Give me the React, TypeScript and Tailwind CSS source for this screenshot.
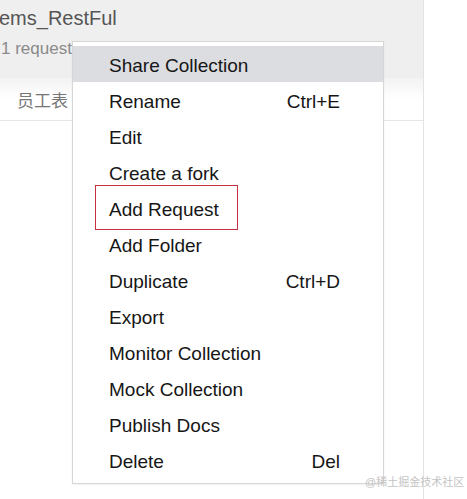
import React from "react";

const items: { label: string; shortcut?: string }[] = [
  { label: "Share Collection" },
  { label: "Rename", shortcut: "Ctrl+E" },
  { label: "Edit" },
  { label: "Create a fork" },
  { label: "Add Request" },
  { label: "Add Folder" },
  { label: "Duplicate", shortcut: "Ctrl+D" },
  { label: "Export" },
  { label: "Monitor Collection" },
  { label: "Mock Collection" },
  { label: "Publish Docs" },
  { label: "Delete", shortcut: "Del" },
];

export default function App() {
  return (
    <div
      className="relative w-[467px] h-[499px] bg-white overflow-hidden"
      style={{ fontFamily: '"Segoe UI", "Liberation Sans", "Noto Sans CJK SC", sans-serif' }}
    >
      <div className="w-[424px] h-full border-r border-[#e3e3e3] flex flex-col">
        <div className="h-[78px] bg-[#efefef] flex flex-col pl-[1px]">
          <div className="text-[20px] text-[#555] mt-[5px] leading-[26px] -ml-[2px]">ems_RestFul</div>
          <div className="text-[17px] text-[#8a8a8a] mt-[7px] leading-[22px]">1 request</div>
        </div>
        <div className="h-[43px] border-b border-[#e6e6e6] bg-gradient-to-b from-[#f3f3f3] to-white to-50% flex items-start pl-[17px] pt-[13px]">
          <span className="text-[17px] leading-[22px] text-[#777]">员工表</span>
        </div>
      </div>

      <div className="absolute left-[72px] top-[41px] w-[312px] bg-white border border-[#d6d6d6] pt-[4px] pb-[5px] shadow-[0_1px_2px_rgba(0,0,0,0.06)]">
        {items.map((it, i) => (
          <div
            key={it.label}
            className={
              "h-[36px] flex items-center justify-between pl-[36px] pr-[43px] pt-[4px] text-[19px] text-[#161616] " +
              (i === 0 ? "bg-[#dcdde0]" : "")
            }
          >
            <span>{it.label}</span>
            {it.shortcut ? <span>{it.shortcut}</span> : null}
          </div>
        ))}
      </div>

      <div className="absolute left-[95px] top-[185px] w-[143px] h-[45px] border border-[#c8303e]" />

      <div className="absolute left-[365px] top-[475px] text-[11px] text-[#c4c4c4] leading-[14px]">
        @稀土掘金技术社区
      </div>
    </div>
  );
}
